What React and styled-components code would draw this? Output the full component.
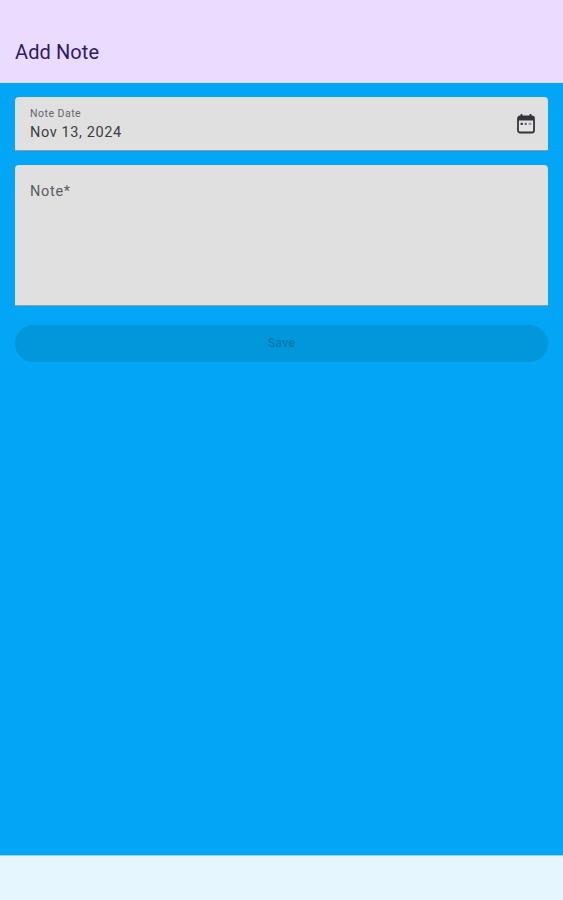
import styled, { createGlobalStyle } from "styled-components";

const GlobalStyle = createGlobalStyle`
  html, body {
    margin: 0;
    padding: 0;
  }
  body {
    font-family: Roboto, "Liberation Sans", sans-serif;
  }
`;

const App = () => {
  return (
    <>
      <GlobalStyle />
      <Screen>
        <TopBar>
          <Title>Add Note</Title>
        </TopBar>
        <Content>
          <DateField>
            <DateText>
              <SmallLabel>Note Date</SmallLabel>
              <DateValue>Nov 13, 2024</DateValue>
            </DateText>
            <CalendarIcon />
          </DateField>
          <NoteField>
            <NoteLabel>Note*</NoteLabel>
          </NoteField>
          <SaveButton disabled>Save</SaveButton>
        </Content>
        <BottomBar />
      </Screen>
    </>
  );
};

const CalendarIcon = () => {
  return (
    <svg width="20" height="22" viewBox="0 0 20 22">
      <path d="M5.5 1v3M14.5 1v3" stroke="#34343a" strokeWidth="1.8" fill="none" />
      <rect x="2" y="3.5" width="16" height="16" rx="2" fill="#e4e4e4" stroke="#34343a" strokeWidth="1.8" />
      <rect x="2" y="3.5" width="16" height="4" fill="#34343a" />
      <rect x="4.6" y="9.8" width="2.2" height="2.2" fill="#34343a" />
      <rect x="8.6" y="9.8" width="2.2" height="2.2" fill="#6a6a70" />
      <rect x="12.6" y="9.8" width="2.6" height="2.2" fill="#9a9aa0" />
    </svg>
  );
};

const Screen = styled.div`
  display: flex;
  flex-direction: column;
  width: 563px;
  height: 900px;
  overflow: hidden;
  background-color: #02a6f4;
`;

const TopBar = styled.header`
  display: flex;
  align-items: flex-end;
  box-sizing: border-box;
  height: 83px;
  padding: 0 15px 19px;
  background-color: #e9dcfe;
`;

const Title = styled.h1`
  margin: 0;
  color: #21085e;
  font-size: 20px;
  font-weight: 400;
  line-height: 24px;
  letter-spacing: 0.1px;
  opacity: 0.92;
`;

const Content = styled.main`
  flex: 1;
  display: flex;
  flex-direction: column;
  padding: 14px 15px 0;
`;

const DateField = styled.div`
  display: flex;
  align-items: center;
  justify-content: space-between;
  box-sizing: border-box;
  height: 54px;
  padding: 0 12px 0 15px;
  background-color: #e0e0e0;
  border-radius: 4px 4px 0 0;
  border-bottom: 1px solid #8f9aa5;
`;

const DateText = styled.div`
  display: flex;
  flex-direction: column;
  gap: 4px;
  padding-top: 2px;
`;

const SmallLabel = styled.span`
  color: #66666a;
  font-size: 10.5px;
  line-height: 13px;
  letter-spacing: 0.5px;
`;

const DateValue = styled.span`
  color: #3c3c40;
  font-size: 14.5px;
  line-height: 18px;
  letter-spacing: 0.6px;
`;

const NoteField = styled.div`
  box-sizing: border-box;
  height: 141px;
  margin-top: 14px;
  padding: 16px 15px 0;
  background-color: #e0e0e0;
  border-radius: 4px 4px 0 0;
  border-bottom: 1px solid #8f9aa5;
`;

const NoteLabel = styled.span`
  color: #5c5c60;
  font-size: 14.5px;
  line-height: 18px;
  letter-spacing: 0.7px;
`;

const SaveButton = styled.button`
  height: 37px;
  margin-top: 19px;
  padding: 0 0 2px;
  border: none;
  border-radius: 19px;
  background-color: #0296da;
  color: #0a78b0;
  font-family: inherit;
  font-size: 12px;
  font-weight: 500;
  letter-spacing: 0.3px;
`;

const BottomBar = styled.footer`
  height: 45px;
  background-color: #e6f6ff;
  border-top: 1px solid #8fd6fa;
  box-sizing: border-box;
`;

export default App;
